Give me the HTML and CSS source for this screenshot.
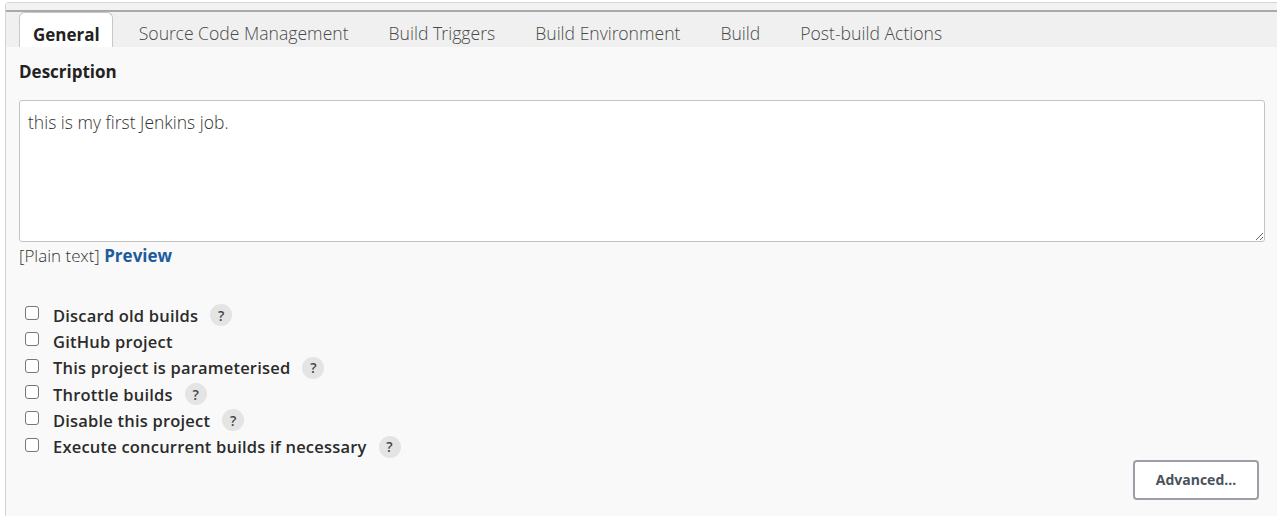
FILE: index.html
```html
<!DOCTYPE html>
<html>
<head>
<meta charset="utf-8">
<link rel="stylesheet" href="styles.css">
</head>
<body>
<div class="frame">
  <div class="topstrip"></div>
  <div class="tabbar">
    <div class="tab active">General</div>
    <div class="tab">Source Code Management</div>
    <div class="tab">Build Triggers</div>
    <div class="tab">Build Environment</div>
    <div class="tab">Build</div>
    <div class="tab">Post-build Actions</div>
  </div>
  <div class="content">
    <div class="section-title">Description</div>
    <textarea class="desc">this is my first Jenkins job.</textarea>
    <div class="format">[Plain text] <a class="preview">Preview</a></div>
    <ul class="options">
      <li class="opt"><span class="box"></span><span class="label">Discard old builds</span><span class="help">?</span></li>
      <li class="opt"><span class="box"></span><span class="label">GitHub project</span></li>
      <li class="opt"><span class="box"></span><span class="label">This project is parameterised</span><span class="help">?</span></li>
      <li class="opt"><span class="box"></span><span class="label">Throttle builds</span><span class="help">?</span></li>
      <li class="opt"><span class="box"></span><span class="label">Disable this project</span><span class="help">?</span></li>
      <li class="opt"><span class="box"></span><span class="label">Execute concurrent builds if necessary</span><span class="help">?</span></li>
    </ul>
    <div class="actions"><button class="advanced">Advanced...</button></div>
  </div>
</div>
</body>
</html>
```

FILE: styles.css
```css
html, body {
  margin: 0;
  padding: 0;
  background: #ffffff;
}
body {
  font-family: "Open Sans", "Noto Sans", sans-serif;
  color: #333;
  height: 516px;
  overflow: hidden;
}
.frame {
  margin: 2px 0 0 5px;
  border-left: 1px solid #d4d4d4;
  border-top: 1px solid #d6d6d6;
  border-top-left-radius: 4px;
  height: 520px;
  background: #f9f9f9;
}
.topstrip {
  height: 7px;
  background: #f1f2f3;
  border-bottom: 2px solid #a9a9a9;
}
.tabbar {
  display: flex;
  align-items: flex-end;
  height: 35px;
  background: #f0f0f0;
  padding-left: 13px;
}
.tab {
  font-family: "Open Sans Light", "Noto Sans Light", "Open Sans", sans-serif;
  font-size: 17.6px;
  font-weight: 300;
  color: #4a4a4a;
  padding: 0 20px;
  height: 35px;
  line-height: 43px;
  box-sizing: border-box;
  white-space: nowrap;
}
.tab.active {
  font-family: "Open Sans", "Noto Sans", sans-serif;
  background: #ffffff;
  font-size: 17px;
  font-weight: 700;
  color: #222;
  border: 1px solid #c8c8c8;
  border-bottom: none;
  border-radius: 6px 6px 0 0;
  padding: 0 12px 0 13px;
  margin-right: 6px;
  line-height: 44px;
}
.content {
  padding: 12px 12px 0 13px;
}
.section-title {
  font-size: 17px;
  font-weight: 700;
  color: #222;
  line-height: 26px;
  margin-bottom: 15px;
}
.desc {
  display: block;
  width: 100%;
  box-sizing: border-box;
  height: 142px;
  border: 1px solid #c4c4c4;
  border-radius: 3px;
  background: #fff;
  font-family: "Open Sans Light", "Open Sans", "Noto Sans", sans-serif;
  font-size: 17.5px;
  color: #333;
  padding: 9px 8px;
  margin: 0;
  resize: vertical;
}
.format {
  font-family: "Open Sans Light", "Open Sans", sans-serif;
  font-size: 17px;
  font-weight: 300;
  color: #333;
  line-height: 24px;
  margin-top: 2px;
}
.preview {
  font-family: "Open Sans", sans-serif;
  font-weight: 700;
  color: #1e5b9c;
  text-decoration: none;
}
.options {
  list-style: none;
  margin: 34px 0 0 0;
  padding: 0 0 0 6px;
}
.opt {
  display: flex;
  align-items: center;
  height: 26.3px;
}
.box {
  width: 12px;
  height: 12px;
  border: 1px solid #777;
  border-radius: 3px;
  background: #fff;
  margin-right: 14px;
  margin-top: -4px;
  flex: none;
}
.label {
  font-size: 16.5px;
  font-weight: 600;
  color: #2b2b2b;
  letter-spacing: 0.2px;
}
.help {
  width: 22px;
  height: 22px;
  border-radius: 50%;
  background: #e4e4e4;
  color: #444;
  font-size: 14px;
  font-weight: 600;
  display: inline-flex;
  align-items: center;
  justify-content: center;
  margin-left: 12px;
}
.actions {
  display: flex;
  justify-content: flex-end;
  padding-right: 6px;
  margin-top: 0px;
}
.advanced {
  width: 126px;
  height: 40px;
  border: 2px solid #9aa0a6;
  border-radius: 4px;
  background: #fff;
  font-family: "Open Sans", "Noto Sans", sans-serif;
  font-size: 14px;
  font-weight: 700;
  color: #4a525b;
}
```
